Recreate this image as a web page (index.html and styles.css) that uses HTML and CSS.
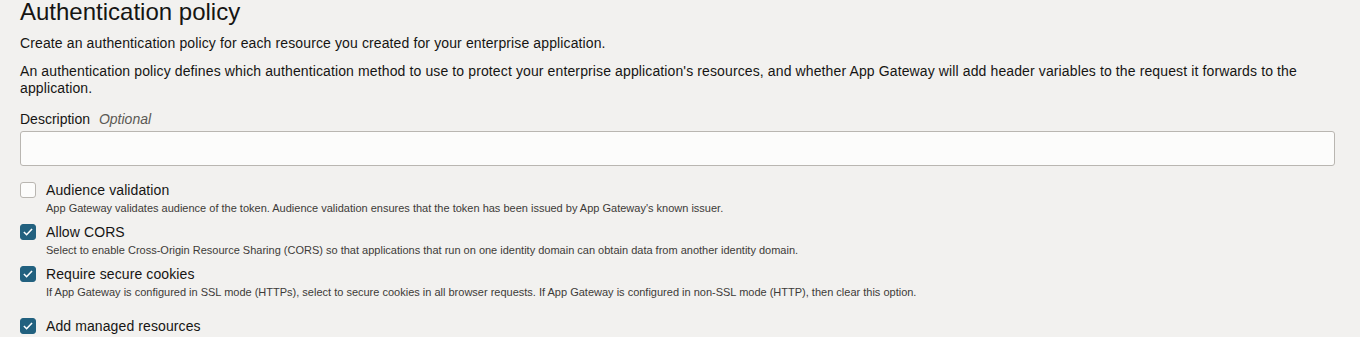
FILE: index.html
```html
<!DOCTYPE html>
<html lang="en">
<head>
  <meta charset="UTF-8">
  <title>Authentication policy</title>
  <link rel="stylesheet" href="styles.css">
</head>
<body>
  <div class="section">
    <h2 class="title">Authentication policy</h2>
    <p class="intro">Create an authentication policy for each resource you created for your enterprise application.</p>
    <p class="intro">An authentication policy defines which authentication method to use to protect your enterprise application's resources, and whether App Gateway will add header variables to the request it forwards to the application.</p>

    <div class="field">
      <label class="field-label" for="desc">Description <span class="optional">Optional</span></label>
      <input type="text" id="desc" class="text-input">
    </div>

    <div class="options">
      <div class="option">
        <label class="check-row">
          <input type="checkbox" class="check">
          <span class="check-box"></span>
          <span class="check-label">Audience validation</span>
        </label>
        <div class="help">App Gateway validates audience of the token. Audience validation ensures that the token has been issued by App Gateway's known issuer.</div>
      </div>
      <div class="option">
        <label class="check-row">
          <input type="checkbox" class="check" checked>
          <span class="check-box"></span>
          <span class="check-label">Allow CORS</span>
        </label>
        <div class="help">Select to enable Cross-Origin Resource Sharing (CORS) so that applications that run on one identity domain can obtain data from another identity domain.</div>
      </div>
      <div class="option">
        <label class="check-row">
          <input type="checkbox" class="check" checked>
          <span class="check-box"></span>
          <span class="check-label">Require secure cookies</span>
        </label>
        <div class="help">If App Gateway is configured in SSL mode (HTTPs), select to secure cookies in all browser requests. If App Gateway is configured in non-SSL mode (HTTP), then clear this option.</div>
      </div>
      <div class="option option-spaced">
        <label class="check-row">
          <input type="checkbox" class="check" checked>
          <span class="check-box"></span>
          <span class="check-label">Add managed resources</span>
        </label>
      </div>
    </div>
  </div>
</body>
</html>
```

FILE: styles.css
```css
body {
  margin: 0;
  background-color: #f2f1ef;
  color: #161513;
  font-family: 'Liberation Sans', Arial, sans-serif;
}

.section {
  padding: 0 25px 0 20px;
}

.title {
  margin: 0;
  font-size: 24px;
  font-weight: normal;
  line-height: 24px;
}

.intro {
  margin: 11px 0 0;
  font-size: 14px;
  line-height: 17px;
  letter-spacing: 0.12px;
}

.field {
  margin-top: 14px;
}

.field-label {
  display: block;
  font-size: 14px;
  line-height: 17px;
  margin-bottom: 3px;
}

.optional {
  margin-left: 5px;
  font-style: italic;
  color: #5b5954;
}

.text-input {
  display: block;
  box-sizing: border-box;
  width: 100%;
  height: 35px;
  margin: 0;
  border: 1px solid #b9b6b1;
  border-radius: 3px;
  background-color: #fcfcfb;
  outline: none;
}

.options {
  margin-top: 15px;
}

.option {
  height: 42px;
}

.option-spaced {
  margin-top: 10px;
}

.check-row {
  display: flex;
  align-items: center;
  gap: 10px;
  height: 17px;
  cursor: pointer;
}

.check {
  display: none;
}

.check-box {
  box-sizing: border-box;
  width: 16px;
  height: 16px;
  border: 1px solid #b9b6b1;
  border-radius: 3px;
  background-color: #fcfcfb;
}

.check:checked + .check-box {
  border-color: #22617f;
  background-color: #22617f;
  background-image: url("data:image/svg+xml,%3Csvg xmlns='http://www.w3.org/2000/svg' viewBox='0 0 16 16'%3E%3Cpath d='M3.3 8l3.1 3.1 6.2-6.6' fill='none' stroke='white' stroke-width='1.8'/%3E%3C/svg%3E");
}

.check-label {
  font-size: 14px;
  letter-spacing: 0.1px;
}

.help {
  margin: 3px 0 0 26px;
  font-size: 11px;
  line-height: 14px;
  color: #3d3b38;
}
```
